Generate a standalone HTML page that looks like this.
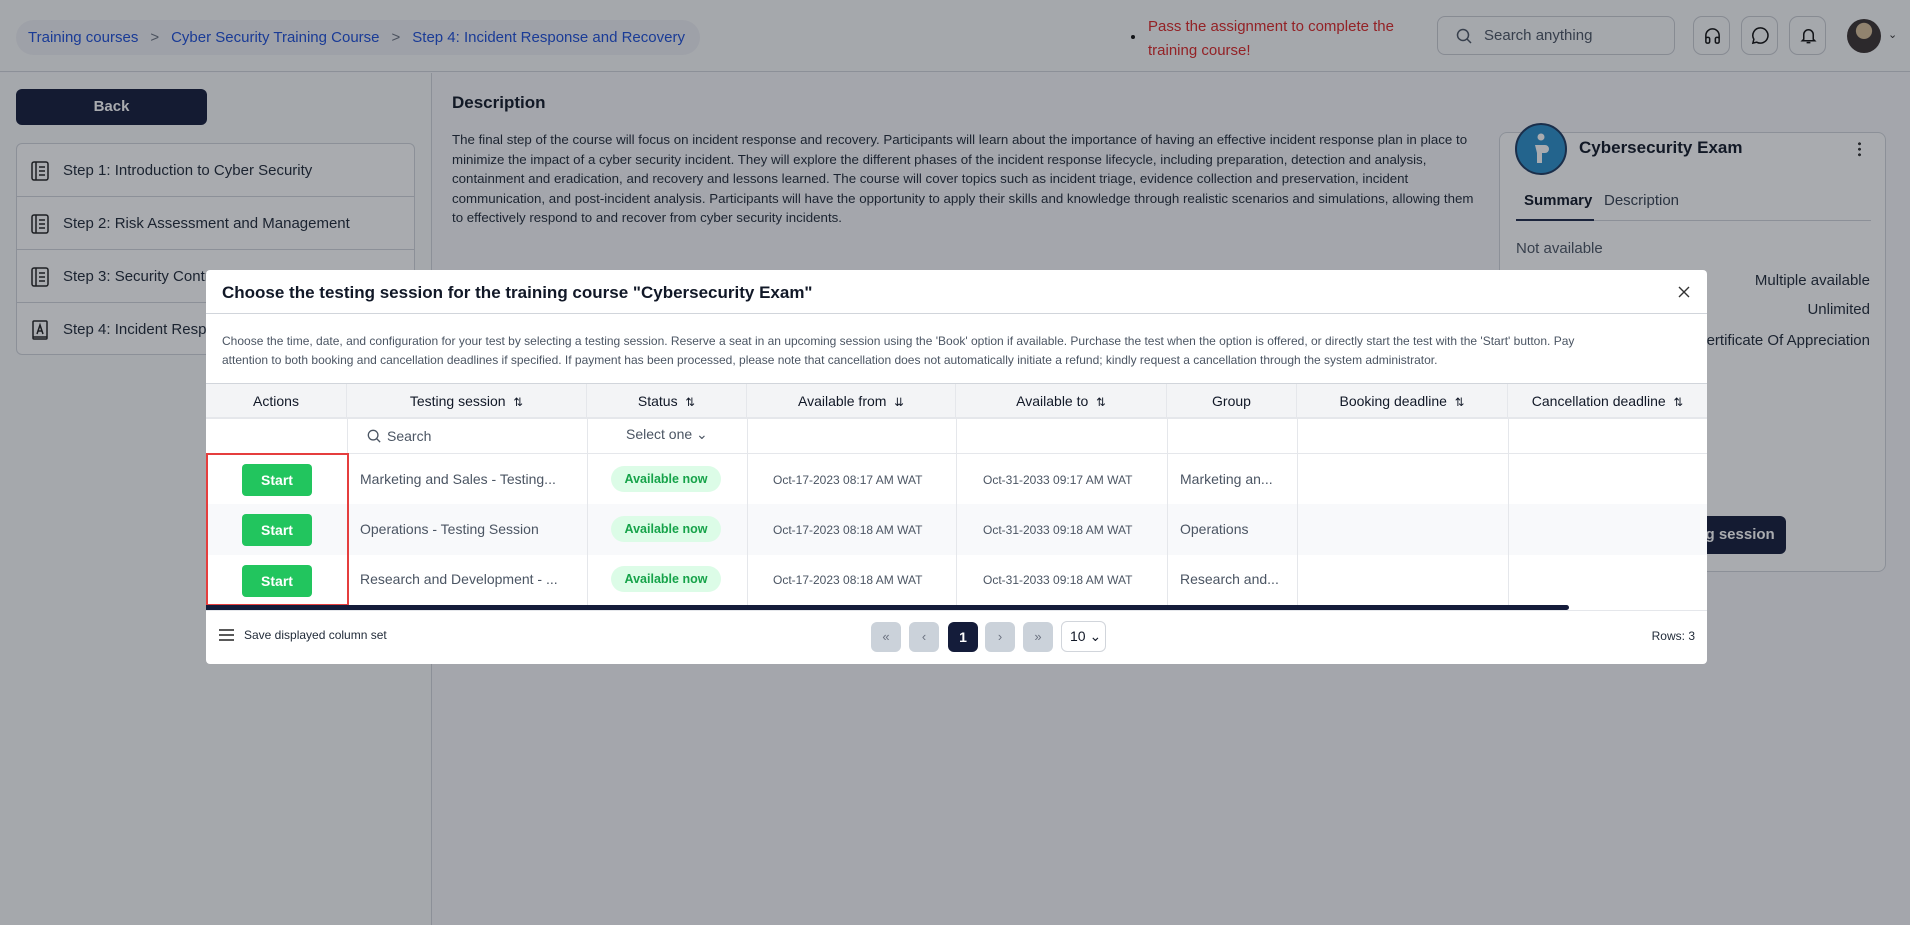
<!DOCTYPE html>
<html><head><meta charset="utf-8"><style>
*{box-sizing:border-box;margin:0;padding:0}
body{width:1910px;height:925px;overflow:hidden;font-family:"Liberation Sans",sans-serif;background:#f7f8fa;position:relative;color:#111827}
.a{position:absolute}
.hdr{left:0;top:0;width:1910px;height:72px;background:#f9fafb;border-bottom:1px solid #d1d5db}
.crumb{left:16px;top:20px;width:684px;height:35px;border-radius:18px;background:#eef0f4;font-size:15px;color:#1d4ed8;line-height:35px;padding-left:12px;white-space:nowrap}
.crumb span.s{color:#6b7280;margin:0 12px}
.ib{width:37px;height:39px;border:1px solid #c9ccd2;border-radius:9px;background:#f9fafb;top:16px}
.side{left:0;top:73px;width:432px;height:852px;border-right:1px solid #d1d5db;background:#f9fafb}
.back{left:16px;top:89px;width:191px;height:36px;border-radius:6px;background:#141c3a;color:#fff;font-size:15px;text-align:center;line-height:36px;font-weight:bold}
.steps{left:16px;top:143px;width:399px;height:212px;border:1px solid #d1d5db;border-radius:6px;background:#fff;overflow:hidden}
.step{height:53px;border-bottom:1px solid #d1d5db;font-size:15px;line-height:53px;padding-left:46px;position:relative;color:#1f2937}
.step svg{position:absolute;left:14px;top:17px}
.card{left:1499px;top:132px;width:387px;height:440px;border:1px solid #d1d5db;border-radius:8px;background:#fff}
.ov{left:0;top:0;width:1910px;height:925px;background:rgba(22,26,38,0.37)}
.modal{left:206px;top:270px;width:1501px;height:394px;background:#fff;border-radius:4px;overflow:hidden}
.th{position:absolute;top:114px;height:34px;background:#f3f4f6;border-right:1px solid #e5e7eb;font-size:14px;line-height:34px;text-align:center;color:#111827}
.cell{position:absolute;border-right:1px solid #e5e7eb}
.btn{position:absolute;left:36px;width:70px;height:32px;background:#22c55e;border-radius:4px;color:#fff;font-weight:bold;font-size:14px;text-align:center;line-height:32px}
.badge{position:absolute;left:24px;width:110px;height:26px;border-radius:13px;background:#dcfce7;color:#16a34a;font-size:12.5px;font-weight:bold;text-align:center;line-height:26px}
.t{position:absolute;font-size:14px;color:#4b5563;white-space:nowrap}
.d{position:absolute;font-size:12px;color:#4b5563;white-space:nowrap}
.pg{position:absolute;top:352px;width:30px;height:30px;border-radius:6px;background:#cbd2da;color:#6b7280;font-size:13px;text-align:center;line-height:30px}
</style></head><body>
<div class="a hdr"></div>
<div class="a crumb">Training courses<span class="s">&gt;</span>Cyber Security Training Course<span class="s">&gt;</span>Step 4: Incident Response and Recovery</div>
<div class="a" style="left:1131px;top:35px;width:4px;height:4px;border-radius:2px;background:#111"></div>
<div class="a" style="left:1148px;top:15px;font-size:15px;color:#dc2626;line-height:24px">Pass the assignment to complete the<br>training course!</div>
<div class="a" style="left:1437px;top:16px;width:238px;height:39px;border:1px solid #c9ccd2;border-radius:8px;background:#f9fafb;font-size:15px;color:#4b5563;line-height:37px;padding-left:46px">Search anything
<svg class="a" style="left:18px;top:11px" width="16" height="16" viewBox="0 0 16 16" fill="none" stroke="#4b5563" stroke-width="1.5"><circle cx="7" cy="7" r="5.5"/><path d="M11 11l4 4"/></svg></div>
<div class="a ib" style="left:1693px"><svg style="margin:9px" width="19" height="19" viewBox="0 0 20 20" fill="none" stroke="#111" stroke-width="1.6"><path d="M3 13V10a7 7 0 0114 0v3"/><rect x="3" y="12" width="4" height="6" rx="1.5"/><rect x="13" y="12" width="4" height="6" rx="1.5"/></svg></div>
<div class="a ib" style="left:1741px"><svg style="margin:9px" width="19" height="19" viewBox="0 0 20 20" fill="none" stroke="#111" stroke-width="1.6"><path d="M10 2a8 8 0 11-4 15l-4 1 1-4A8 8 0 0110 2z"/></svg></div>
<div class="a ib" style="left:1789px"><svg style="margin:9px" width="19" height="19" viewBox="0 0 20 20" fill="none" stroke="#111" stroke-width="1.6"><path d="M5 14V9a5 5 0 0110 0v5l1.5 1.5h-13z"/><path d="M8 17.5h4"/></svg></div>
<div class="a" style="left:1847px;top:19px;width:34px;height:34px;border-radius:17px;background:radial-gradient(circle at 50% 35%,#d9c09a 0 28%,#3a3130 30% 100%)"></div>
<div class="a" style="left:1888px;top:28px;font-size:11px;color:#333">&#8964;</div>
<div class="a side"></div>
<div class="a back">Back</div>
<div class="a steps">
<div class="step"><svg width="18" height="20" viewBox="0 0 18 20" fill="none" stroke="#222" stroke-width="1.5"><rect x="1" y="1" width="16" height="18" rx="2"/><path d="M5 1v18M8 6h6M8 10h6M8 14h6"/></svg>Step 1: Introduction to Cyber Security</div>
<div class="step"><svg width="18" height="20" viewBox="0 0 18 20" fill="none" stroke="#222" stroke-width="1.5"><rect x="1" y="1" width="16" height="18" rx="2"/><path d="M5 1v18M8 6h6M8 10h6M8 14h6"/></svg>Step 2: Risk Assessment and Management</div>
<div class="step"><svg width="18" height="20" viewBox="0 0 18 20" fill="none" stroke="#222" stroke-width="1.5"><rect x="1" y="1" width="16" height="18" rx="2"/><path d="M5 1v18M8 6h6M8 10h6M8 14h6"/></svg>Step 3: Security Controls and Technologies</div>
<div class="step" style="border:0"><svg width="18" height="20" viewBox="0 0 18 20" fill="none" stroke="#222" stroke-width="1.5"><rect x="2" y="1" width="14" height="18" rx="1"/><path d="M6 14l3-9 3 9M7 11h4M2 17h14"/></svg>Step 4: Incident Response and Recovery</div>
</div>
<div class="a" style="left:452px;top:93px;font-size:17px;font-weight:bold">Description</div>
<div class="a" style="left:452px;top:130px;width:1030px;font-size:13.3px;line-height:19.5px;color:#1f2937">The final step of the course will focus on incident response and recovery. Participants will learn about the importance of having an effective incident response plan in place to minimize the impact of a cyber security incident. They will explore the different phases of the incident response lifecycle, including preparation, detection and analysis, containment and eradication, and recovery and lessons learned. The course will cover topics such as incident triage, evidence collection and preservation, incident communication, and post-incident analysis. Participants will have the opportunity to apply their skills and knowledge through realistic scenarios and simulations, allowing them to effectively respond to and recover from cyber security incidents.</div>
<div class="a card"></div>
<svg class="a" style="left:1515px;top:123px" width="52" height="52" viewBox="0 0 52 52"><circle cx="26" cy="26" r="25" fill="#2b8fc9" stroke="#1e3a5f" stroke-width="2"/><circle cx="26" cy="14" r="3.5" fill="#fff"/><path d="M20 22h10a4 4 0 010 8h-3v10h-5V30" fill="#fff"/></svg>
<div class="a" style="left:1579px;top:138px;font-size:17px;font-weight:bold">Cybersecurity Exam</div>
<div class="a" style="left:1858px;top:141px;width:3px;height:16px;background:radial-gradient(circle,#333 1.4px,transparent 1.6px) 0 0/3px 5.5px"></div>
<div class="a" style="left:1524px;top:192px;font-size:15px;font-weight:bold">Summary</div>
<div class="a" style="left:1604px;top:192px;font-size:15px;color:#374151">Description</div>
<div class="a" style="left:1516px;top:220px;width:355px;height:1px;background:#d1d5db"></div>
<div class="a" style="left:1516px;top:219px;width:78px;height:2px;background:#1f2a4a"></div>
<div class="a" style="left:1516px;top:240px;font-size:15px;color:#4b5563">Not available</div>
<div class="a" style="right:40px;top:272px;font-size:15px;color:#1f2937">Multiple available</div>
<div class="a" style="right:40px;top:301px;font-size:15px;color:#1f2937">Unlimited</div>
<div class="a" style="right:40px;top:332px;font-size:15px;color:#1f2937">Certificate Of Appreciation</div>
<div class="a" style="left:1600px;top:516px;width:186px;height:38px;border-radius:6px;background:#141c3a;color:#fff;font-size:15px;font-weight:bold;line-height:38px;text-align:center">Book a testing session</div>
<div class="a ov"></div>
<div class="a modal">
<div class="a" style="left:16px;top:13px;font-size:17px;font-weight:bold">Choose the testing session for the training course "Cybersecurity Exam"</div>
<svg class="a" style="left:1472px;top:16px" width="12" height="12" viewBox="0 0 12 12" stroke="#333" stroke-width="1.4"><path d="M1 1l10 10M11 1L1 11"/></svg>
<div class="a" style="left:0;top:43px;width:1501px;height:1px;background:#d1d5db"></div>
<div class="a" style="left:16px;top:62px;width:1385px;font-size:12px;line-height:19px;color:#4b5563">Choose the time, date, and configuration for your test by selecting a testing session. Reserve a seat in an upcoming session using the 'Book' option if available. Purchase the test when the option is offered, or directly start the test with the 'Start' button. Pay attention to both booking and cancellation deadlines if specified. If payment has been processed, please note that cancellation does not automatically initiate a refund; kindly request a cancellation through the system administrator.</div>
<div class="a" style="left:0;top:113px;width:1501px;height:1px;background:#d1d5db"></div>
<div class="th" style="left:0;width:141px">Actions</div>
<div class="th" style="left:141px;width:240px">Testing session &nbsp;<small>⇅</small></div>
<div class="th" style="left:381px;width:160px">Status &nbsp;<small>⇅</small></div>
<div class="th" style="left:541px;width:209px">Available from &nbsp;<small>⇊</small></div>
<div class="th" style="left:750px;width:211px">Available to &nbsp;<small>⇅</small></div>
<div class="th" style="left:961px;width:130px">Group</div>
<div class="th" style="left:1091px;width:211px">Booking deadline &nbsp;<small>⇅</small></div>
<div class="th" style="left:1302px;width:199px;border:0">Cancellation deadline &nbsp;<small>⇅</small></div>
<div class="a" style="left:0;top:147px;width:1501px;height:2px;background:#e5e7eb"></div>
<div class="a" style="left:0;top:183px;width:1501px;height:1px;background:#e5e7eb"></div>
<div class="a" style="left:0;top:234px;width:1501px;height:51px;background:#f8f9fb"></div>
<div class="cell" style="left:141px;top:149px;height:186px;width:1px;background:#e5e7eb"></div>
<div class="cell" style="left:381px;top:149px;height:186px;width:1px;background:#e5e7eb"></div>
<div class="cell" style="left:541px;top:149px;height:186px;width:1px;background:#e5e7eb"></div>
<div class="cell" style="left:750px;top:149px;height:186px;width:1px;background:#e5e7eb"></div>
<div class="cell" style="left:961px;top:149px;height:186px;width:1px;background:#e5e7eb"></div>
<div class="cell" style="left:1091px;top:149px;height:186px;width:1px;background:#e5e7eb"></div>
<div class="cell" style="left:1302px;top:149px;height:186px;width:1px;background:#e5e7eb"></div>
<svg class="a" style="left:161px;top:159px" width="14" height="14" viewBox="0 0 16 16" fill="none" stroke="#4b5563" stroke-width="1.5"><circle cx="7" cy="7" r="5.5"/><path d="M11 11l4 4"/></svg>
<div class="t" style="left:181px;top:158px">Search</div>
<div class="t" style="left:420px;top:156px">Select one &#8964;</div>
<div class="a" style="left:0;top:183px;width:143px;height:153px;border:2px solid #e53e3e"></div>
<div class="btn" style="top:194px">Start</div>
<div class="btn" style="top:244px">Start</div>
<div class="btn" style="top:295px">Start</div>
<div class="t" style="left:154px;top:201px">Marketing and Sales - Testing...</div>
<div class="t" style="left:154px;top:251px">Operations - Testing Session</div>
<div class="t" style="left:154px;top:301px">Research and Development - ...</div>
<div class="badge" style="left:405px;top:196px">Available now</div>
<div class="badge" style="left:405px;top:246px">Available now</div>
<div class="badge" style="left:405px;top:296px">Available now</div>
<div class="d" style="left:567px;top:203px">Oct-17-2023 08:17 AM WAT</div>
<div class="d" style="left:567px;top:253px">Oct-17-2023 08:18 AM WAT</div>
<div class="d" style="left:567px;top:303px">Oct-17-2023 08:18 AM WAT</div>
<div class="d" style="left:777px;top:203px">Oct-31-2033 09:17 AM WAT</div>
<div class="d" style="left:777px;top:253px">Oct-31-2033 09:18 AM WAT</div>
<div class="d" style="left:777px;top:303px">Oct-31-2033 09:18 AM WAT</div>
<div class="t" style="left:974px;top:201px">Marketing an...</div>
<div class="t" style="left:974px;top:251px">Operations</div>
<div class="t" style="left:974px;top:301px">Research and...</div>
<div class="a" style="left:0;top:335px;width:1363px;height:5px;background:#141c3a;border-radius:0 3px 3px 0"></div>
<div class="a" style="left:0;top:340px;width:1501px;height:1px;background:#e5e7eb"></div>
<svg class="a" style="left:13px;top:359px" width="15" height="12" viewBox="0 0 15 12" stroke="#222" stroke-width="1.5"><path d="M0 1h15M0 6h15M0 11h15"/></svg>
<div class="a" style="left:38px;top:358px;font-size:12px;color:#1f2937">Save displayed column set</div>
<div class="pg" style="left:665px">&laquo;</div>
<div class="pg" style="left:703px">&lsaquo;</div>
<div class="pg" style="left:742px;background:#141c3a;color:#fff;font-weight:bold;font-size:14px">1</div>
<div class="pg" style="left:779px">&rsaquo;</div>
<div class="pg" style="left:817px">&raquo;</div>
<div class="a" style="left:855px;top:351px;width:45px;height:31px;border:1px solid #d1d5db;border-radius:6px;font-size:14px;line-height:29px;padding-left:8px">10 &#8964;</div>
<div class="a" style="right:12px;top:359px;font-size:12px;color:#1f2937">Rows: 3</div>
</div>
</body></html>
